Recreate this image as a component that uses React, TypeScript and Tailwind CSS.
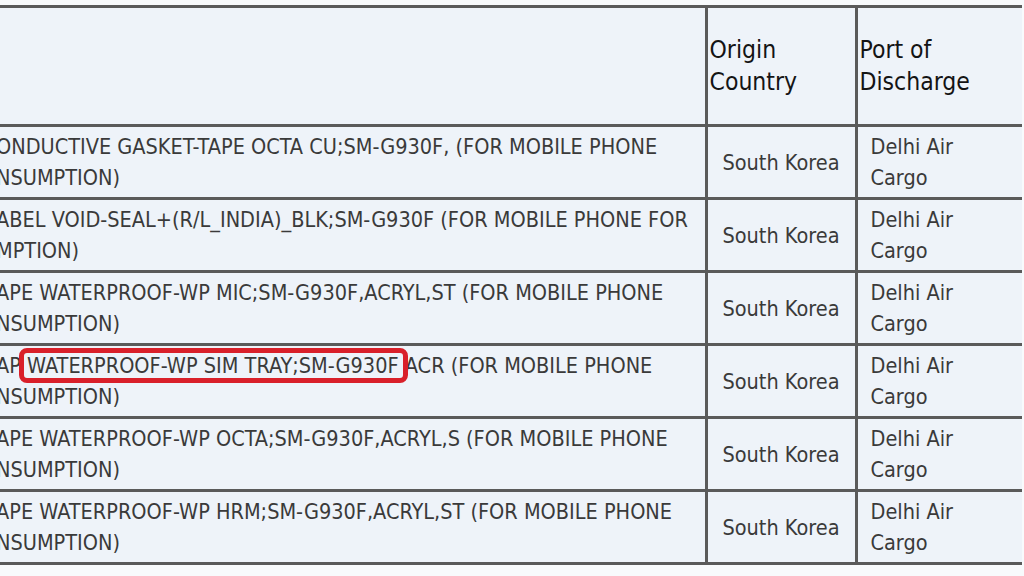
const rows = [
  {
    line1: "ONDUCTIVE GASKET-TAPE OCTA CU;SM-G930F, (FOR MOBILE PHONE",
    line2: "NSUMPTION)",
  },
  {
    line1: "ABEL VOID-SEAL+(R/L_INDIA)_BLK;SM-G930F (FOR MOBILE PHONE FOR",
    line2: "MPTION)",
  },
  {
    line1: "APE WATERPROOF-WP MIC;SM-G930F,ACRYL,ST (FOR MOBILE PHONE",
    line2: "NSUMPTION)",
  },
  { line1: "", line2: "NSUMPTION)", marked: true },
  {
    line1: "APE WATERPROOF-WP OCTA;SM-G930F,ACRYL,S (FOR MOBILE PHONE",
    line2: "NSUMPTION)",
  },
  {
    line1: "APE WATERPROOF-WP HRM;SM-G930F,ACRYL,ST (FOR MOBILE PHONE",
    line2: "NSUMPTION)",
  },
];

const font = { fontFamily: '"DejaVu Sans Condensed", "DejaVu Sans", sans-serif' };

function MarkedLine() {
  return (
    <>
      AP
      <span className="relative">
        {" "}
        WATERPROOF-WP SIM TRAY;SM-G930F
        <span className="absolute -left-[2px] -right-[9px] -top-[5px] -bottom-[5px] border-[5px] border-[#d9202a] rounded-[8px]" />
      </span>{" "}
      ACR (FOR MOBILE PHONE
    </>
  );
}

export default function App() {
  return (
    <div
      className="w-[1024px] h-[576px] overflow-hidden bg-[#f8fafc] pt-[5px]"
      style={font}
    >
      <table className="border-collapse w-[1022px] bg-[#eef3f9] text-[#3a3a3a]">
        <thead>
          <tr className="h-[119px]">
            <th className="w-[706px] border-y-[3px] border-r-[3px] border-[#5a5a5a]" />
            <th className="w-[150px] border-[3px] border-[#5a5a5a] px-[2px] text-left align-middle font-normal text-[24.5px] leading-[32px] text-[#141414]">
              Origin
              <br />
              Country
            </th>
            <th className="border-y-[3px] border-l-[3px] border-[#5a5a5a] px-[2px] text-left align-middle font-normal text-[24.5px] leading-[32px] text-[#141414]">
              Port of
              <br />
              Discharge
            </th>
          </tr>
        </thead>
        <tbody>
          {rows.map((r, i) => (
            <tr key={i} className="h-[73px]">
              <td className="border-y-[3px] border-r-[3px] border-[#5a5a5a] align-middle text-[21.5px] leading-[31px] whitespace-nowrap">
                <div className="-ml-[4px]">
                  {r.marked ? <MarkedLine /> : r.line1}
                  <br />
                  {r.line2}
                </div>
              </td>
              <td className="border-[3px] border-[#5a5a5a] text-center align-middle text-[21.5px] leading-[31px]">
                South Korea
              </td>
              <td className="border-y-[3px] border-l-[3px] border-[#5a5a5a] pl-[13px] align-middle text-[21.5px] leading-[31px]">
                Delhi Air
                <br />
                Cargo
              </td>
            </tr>
          ))}
        </tbody>
      </table>
    </div>
  );
}
